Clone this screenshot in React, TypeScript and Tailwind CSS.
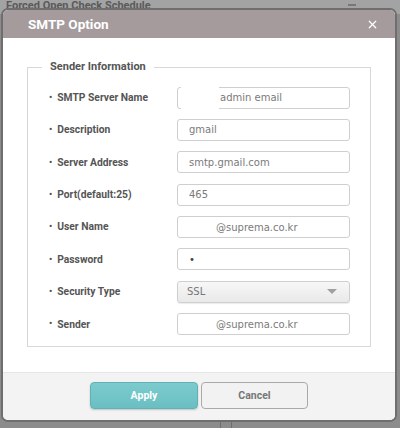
import { X } from "lucide-react";

const FIELDS: { label: string; value: string; kind?: "select" | "masked" | "redacted" | "password" }[] = [
  { label: "SMTP Server Name", value: "admin email", kind: "masked" },
  { label: "Description", value: "gmail" },
  { label: "Server Address", value: "smtp.gmail.com" },
  { label: "Port(default:25)", value: "465" },
  { label: "User Name", value: "@suprema.co.kr", kind: "redacted" },
  { label: "Password", value: "•", kind: "password" },
  { label: "Security Type", value: "SSL", kind: "select" },
  { label: "Sender", value: "@suprema.co.kr", kind: "redacted" },
];

function Field({ value, kind }: { value: string; kind?: string }) {
  if (kind === "select") {
    return (
      <div className="w-[173px] h-[22px] rounded-[3px] border border-[#cfcfcf] bg-gradient-to-b from-[#f7f7f7] to-[#e9e9e9] flex items-center justify-between pl-[9px] pr-[12px] shadow-[0_1px_1px_rgba(0,0,0,0.08)]">
        <span className="text-[10px] text-[#777] font-['DejaVu_Sans',sans-serif]">{value}</span>
        <span className="w-0 h-0 border-l-[5px] border-r-[5px] border-t-[5px] border-l-transparent border-r-transparent border-t-[#a0a0a0]" />
      </div>
    );
  }
  const pad = kind === "masked" ? "pl-[42px]" : kind === "redacted" ? "pl-[38px]" : "pl-[11px]";
  return (
    <div className={`relative w-[173px] h-[22px] rounded-[3px] border border-[#cfcfcf] bg-white flex items-center ${pad}`}>
      {kind === "masked" && <span className="absolute left-[3px] -top-[1px] w-[38px] h-[23px] bg-white" />}
      <span className={`relative text-[10px] font-['DejaVu_Sans',sans-serif] ${kind === "password" ? "text-[#444]" : "text-[#7a7a7a]"}`}>
        {value}
      </span>
    </div>
  );
}

export default function App() {
  return (
    <div className="relative w-[400px] h-[428px] overflow-hidden bg-[#8c8c8c] font-['Roboto',sans-serif]">
      {/* page behind the overlay */}
      <div className="absolute left-0 top-0 w-[400px] h-[14px] bg-[#a3a3a3]" />
      <div className="absolute left-[6px] top-0 text-[11px] leading-none font-bold text-[#5a5a5a]">Forced Open Check Schedule</div>
      <div className="absolute left-[348px] top-[4px] w-[8px] h-[2px] bg-[#777]" />
      <div className="absolute left-[220px] top-[414px] w-[12px] h-[14px] border-x border-[#6f6f6f]" />

      {/* dialog */}
      <div className="absolute left-[1px] top-[8px] w-[396px] h-[414px] rounded-[7px] border-2 border-[#6e6e6e] overflow-hidden flex flex-col bg-white">
        <div className="h-[28px] bg-[#a59b9d] flex items-center justify-between pl-[25px] pr-[16px]">
          <span className="text-[13.5px] font-bold text-white">SMTP Option</span>
          <X className="w-[13px] h-[13px] text-white" strokeWidth={2.2} />
        </div>

        <div className="flex-1 px-[24px] pt-[21px]">
          <fieldset className="border border-[#d8d8d8] pb-[11px]">
            <legend className="ml-[14px] px-[8px] text-[11px] font-bold text-[#555]">Sender Information</legend>
            <div className="flex flex-col gap-[10.4px] pt-[11px] pl-[21px] pr-[20px]">
              {FIELDS.map((f) => (
                <div key={f.label} className="flex items-center justify-between">
                  <div className="flex items-center gap-[5px] text-[10.3px] font-bold text-[#555]">
                    <span className="text-[9px]">•</span>
                    <span>{f.label}</span>
                  </div>
                  <Field value={f.value} kind={f.kind} />
                </div>
              ))}
            </div>
          </fieldset>
        </div>

        <div className="h-[48px] bg-[#f3f3f3] border-t border-[#e6e6e6] flex items-center justify-center gap-[3px] pb-[2px]">
          <button className="w-[108px] h-[27px] rounded-[4px] border border-[#5fb1b4] bg-gradient-to-b from-[#7ccbce] to-[#6abfc2] text-[10.5px] font-bold text-white shadow-[0_1px_2px_rgba(0,0,0,0.2)]">
            Apply
          </button>
          <button className="w-[107px] h-[27px] rounded-[4px] border border-[#a9a9a9] bg-[#f2f2f2] text-[10.5px] font-bold text-[#777]">
            Cancel
          </button>
        </div>
      </div>
    </div>
  );
}
